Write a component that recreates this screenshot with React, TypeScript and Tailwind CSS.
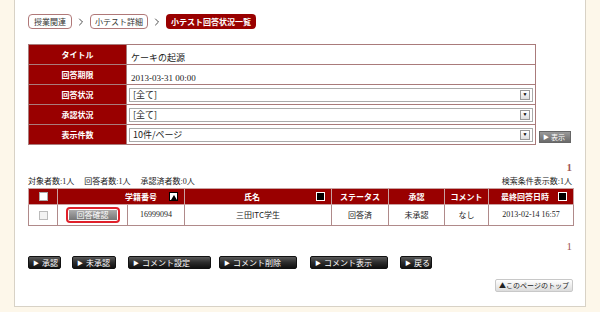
import { ChevronRight } from "lucide-react"

const jp = "font-['Noto_Sans_CJK_JP',sans-serif]"
const serif = "font-['Liberation_Serif','Noto_Sans_CJK_JP',serif]"

function DarkButton({ label, w }: { label: string; w: string }) {
  return (
    <button
      className={`${w} h-[13px] flex items-center gap-[3px] pl-[4px] rounded-[2px] border border-[#111] bg-gradient-to-b from-[#5a5a5a] via-[#2c2c2c] to-[#111] text-white text-[8px] leading-none whitespace-nowrap ${jp}`}
    >
      <span className="text-[6px]">▶</span>
      {label}
    </button>
  )
}

function Select({ value }: { value: string }) {
  return (
    <div className="mx-[2px] h-[14px] flex items-center justify-between border border-[#aaa] bg-white pl-[3px] pr-[2px]">
      <span className={`text-[9px] leading-none text-[#222] ${jp}`}>{value}</span>
      <span className="w-[10px] h-[10px] border border-[#999] bg-gradient-to-b from-white to-[#ddd] flex items-center justify-center text-[5px] leading-none text-black">
        ▼
      </span>
    </div>
  )
}

function SortIcon({ up }: { up?: boolean }) {
  return up ? (
    <span className="w-[9px] h-[9px] shrink-0 bg-white border border-black flex items-end justify-center">
      <span className="w-0 h-0 border-l-[3px] border-r-[3px] border-b-[5px] border-l-transparent border-r-transparent border-b-black" />
    </span>
  ) : (
    <span className="w-[9px] h-[9px] shrink-0 bg-black border border-white" />
  )
}

export default function App() {
  const formRows = [
    { label: "タイトル", value: <span className={`text-[9px] pl-[4px] ${jp}`}>ケーキの起源</span> },
    { label: "回答期限", value: <span className={`text-[9px] pl-[4px] ${serif}`}>2013-03-31 00:00</span> },
    { label: "回答状況", value: <Select value="[全て]" /> },
    { label: "承認状況", value: <Select value="[全て]" /> },
    { label: "表示件数", value: <Select value="10件/ページ" /> },
  ]

  const th = "bg-[#990000] text-white font-semibold text-[8px] leading-none whitespace-nowrap border border-[#c9a0a0] h-[16px] p-0 px-[3px]"
  const td = "border border-[#b08a8a] h-[21px] p-0 text-center text-[8px] leading-none whitespace-nowrap text-[#222]"

  return (
    <div className="w-[600px] h-[312px] bg-[#fdf7ea] overflow-hidden">
      <div className="mx-[14px] h-[307px] bg-white border-x border-b border-[#d8d2c6] pl-[13px] pr-[14px] pt-[14px]">
        {/* breadcrumb */}
        <div className={`flex items-center gap-[3px] text-[8px] leading-none ${jp}`}>
          <span className="h-[15px] px-[5px] flex items-center rounded-[4px] border border-[#b07878] text-[#333]">授業関連</span>
          <ChevronRight size={12} strokeWidth={1.75} className="text-[#333]" />
          <span className="h-[15px] px-[4px] flex items-center rounded-[4px] border border-[#b07878] text-[#333]">小テスト詳細</span>
          <ChevronRight size={12} strokeWidth={1.75} className="text-[#333]" />
          <span className="h-[15px] px-[5px] flex items-center rounded-[4px] bg-[#990000] text-white font-semibold">小テスト回答状況一覧</span>
        </div>

        {/* search form */}
        <div className="mt-[15px] flex items-end gap-[3px]">
          <table className="w-[510px] border-collapse border border-[#a97b7b]">
            <tbody>
              {formRows.map((r) => (
                <tr key={r.label}>
                  <th className={`w-[98px] h-[20px] p-0 bg-[#990000] text-white text-[8px] leading-none font-semibold border-b border-[#a97b7b] ${jp}`}>
                    {r.label}
                  </th>
                  <td className="h-[20px] p-0 border border-[#a97b7b] text-[#222] leading-none">{r.value}</td>
                </tr>
              ))}
            </tbody>
          </table>
          <button
            className={`mb-[2px] w-[32px] h-[12px] shrink-0 flex items-center gap-[2px] pl-[3px] border border-[#666] bg-gradient-to-b from-[#9a9a9a] to-[#6a6a6a] text-white text-[7px] leading-none ${jp}`}
          >
            <span className="text-[6px]">▶</span>表示
          </button>
        </div>

        {/* pager */}
        <div className={`mt-[17px] flex justify-end w-[544px] text-[11px] font-bold text-[#a05858] leading-none ${serif}`}>1</div>

        <div className={`mt-[5px] flex justify-between text-[8px] text-[#222] leading-none w-[544px] ${serif}`}>
          <span className="flex gap-[10px]">
            <span>対象者数:1人</span>
            <span>回答者数:1人</span>
            <span>承認済者数:0人</span>
          </span>
          <span>検索条件表示数:1人</span>
        </div>

        {/* results */}
        <table className={`mt-[2px] w-[545px] table-fixed border-collapse border border-[#a97b7b] ${jp}`}>
          <colgroup>
            <col className="w-[29px]" />
            <col className="w-[70px]" />
            <col className="w-[57px]" />
            <col className="w-[147px]" />
            <col className="w-[57px]" />
            <col className="w-[56px]" />
            <col className="w-[44px]" />
            <col className="w-[85px]" />
          </colgroup>
          <thead>
            <tr>
              <th className={th}>
                <span className="inline-block w-[9px] h-[9px] bg-white border border-[#aaa] align-middle" />
              </th>
              <th className={th} colSpan={2}>
                <span className="flex items-center justify-end gap-[4px] pr-[3px]">
                  <span className="mr-[8px]">学籍番号</span>
                  <SortIcon up />
                </span>
              </th>
              <th className={th}>
                <span className="flex items-center justify-end pr-[3px]">
                  <span className="flex-1 text-center">氏名</span>
                  <SortIcon />
                </span>
              </th>
              <th className={th}>ステータス</th>
              <th className={th}>承認</th>
              <th className={th}>コメント</th>
              <th className={th}>
                <span className="flex items-center justify-end pr-[3px]">
                  <span className="flex-1 text-center">最終回答日時</span>
                  <SortIcon />
                </span>
              </th>
            </tr>
          </thead>
          <tbody>
            <tr>
              <td className={td}>
                <span className="inline-block w-[9px] h-[9px] bg-[#f3f3f3] border border-[#bbb] align-middle" />
              </td>
              <td className={td}>
                <span className="inline-flex rounded-[4px] border-[2px] border-[#e0202a] p-[1px] align-middle">
                  <span className="w-[48px] h-[10px] flex items-center justify-center bg-gradient-to-b from-[#aaa] to-[#777] text-white text-[8px] leading-none">
                    回答確認
                  </span>
                </span>
              </td>
              <td className={`${td} ${serif}`}>16999094</td>
              <td className={td}>三田ITC学生</td>
              <td className={td}>回答済</td>
              <td className={td}>未承認</td>
              <td className={td}>なし</td>
              <td className={`${td} ${serif}`}>2013-02-14 16:57</td>
            </tr>
          </tbody>
        </table>

        <div className={`mt-[15px] flex justify-end w-[544px] text-[11px] text-[#a05858] leading-none ${serif}`}>1</div>

        {/* action buttons */}
        <div className="mt-[4px] flex items-center">
          <DarkButton label="承認" w="w-[33px]" />
          <span className="w-[11px]" />
          <DarkButton label="未承認" w="w-[44px]" />
          <span className="w-[12px]" />
          <DarkButton label="コメント設定" w="w-[83px]" />
          <span className="w-[8px]" />
          <DarkButton label="コメント削除" w="w-[78px]" />
          <span className="w-[13px]" />
          <DarkButton label="コメント表示" w="w-[78px]" />
          <span className="w-[12px]" />
          <DarkButton label="戻る" w="w-[32px]" />
        </div>

        <div className="mt-[10px] flex justify-end w-[545px]">
          <button
            className={`w-[78px] h-[13px] flex items-center justify-center rounded-[2px] border border-[#c8c8c8] bg-gradient-to-b from-white to-[#dcdcdc] text-[7px] text-[#222] leading-none whitespace-nowrap ${jp}`}
          >
            ▲このページのトップ
          </button>
        </div>
      </div>
    </div>
  )
}
